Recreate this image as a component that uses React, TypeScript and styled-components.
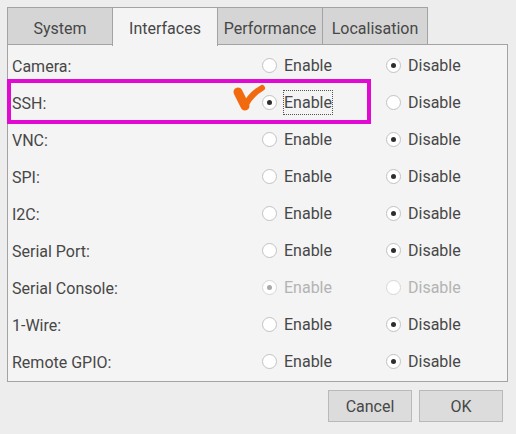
import React from "react";
import styled, { createGlobalStyle } from "styled-components";

const Global = createGlobalStyle`
    html, body {
        margin: 0;
        padding: 0;
        background: #ededed;
        font-family: Roboto, "Liberation Sans", sans-serif;
        font-size: 16px;
        color: #474747;
    }
`;

const Dialog = styled.div`
    width: 516px;
    height: 434px;
    padding: 7px 8px 0 7px;
    box-sizing: border-box;
    display: flex;
    flex-direction: column;
`;

const TabBar = styled.div`
    display: flex;
    height: 38px;
    position: relative;
    z-index: 1;
`;

const Tab = styled.div<{ $active?: boolean }>`
    width: 106px;
    box-sizing: border-box;
    display: flex;
    align-items: center;
    justify-content: center;
    border: 1px solid #a3a3a3;
    border-bottom: ${({ $active }) => ($active ? "none" : "1px solid #a3a3a3")};
    margin-left: -1px;
    background: ${({ $active }) => ($active ? "#f4f4f4" : "#d5d5d5")};
    height: ${({ $active }) => ($active ? "39px" : "38px")};
    padding-top: ${({ $active }) => ($active ? "3px" : "4px")};
    &:first-child {
        margin-left: 0;
    }
`;

const Panel = styled.div`
    margin-top: -1px;
    height: 338px;
    box-sizing: border-box;
    border: 1px solid #a3a3a3;
    background: #f4f4f4;
    padding: 2px 0 0 4px;
`;

const Row = styled.div`
    position: relative;
    height: 37px;
    display: grid;
    grid-template-columns: 250px 124px 1fr;
    align-items: center;
`;

const Label = styled.span`
    padding-top: 1px;
`;

const Option = styled.div<{ $disabled?: boolean }>`
    display: flex;
    align-items: center;
    color: ${({ $disabled }) => ($disabled ? "#b3b3b3" : "#474747")};
`;

const Radio = styled.span<{ $checked?: boolean; $disabled?: boolean }>`
    width: 15px;
    height: 15px;
    box-sizing: border-box;
    border-radius: 50%;
    border: 1px solid ${({ $disabled }) => ($disabled ? "#d6d6d6" : "#c2c2c2")};
    background: #ffffff;
    display: flex;
    align-items: center;
    justify-content: center;
    margin-right: 8px;
    &::after {
        content: "";
        display: ${({ $checked }) => ($checked ? "block" : "none")};
        width: 5px;
        height: 5px;
        border-radius: 50%;
        background: ${({ $disabled }) => ($disabled ? "#a9a9a9" : "#2e2e2e")};
    }
`;

const OptionText = styled.span<{ $focus?: boolean }>`
    padding: 3px 1px 3px 1px;
    margin-left: -2px;
    outline: ${({ $focus }) => ($focus ? "1px dotted #555" : "none")};
    outline-offset: -1px;
`;

const Highlight = styled.div`
    position: absolute;
    left: -5px;
    top: -5px;
    width: 364px;
    height: 45px;
    box-sizing: border-box;
    border: 4px solid #e10ad2;
    pointer-events: none;
`;

const Tick = styled.svg`
    position: absolute;
    left: 219px;
    top: -1px;
`;

const Footer = styled.div`
    display: flex;
    justify-content: flex-end;
    gap: 7px;
    padding: 8px 5px 0 0;
`;

const Button = styled.button`
    width: 84px;
    height: 32px;
    box-sizing: border-box;
    border: 1px solid #b9b9b9;
    background: #dcdcdc;
    font-family: Roboto, "Liberation Sans", sans-serif;
    font-size: 16px;
    color: #474747;
    padding: 1px 0 0;
    border-radius: 0;
`;

type Item = {
    name: string;
    enabled: boolean;
    disabled?: boolean;
    focus?: boolean;
};

const items: Item[] = [
    { name: "Camera:", enabled: false },
    { name: "SSH:", enabled: true, focus: true },
    { name: "VNC:", enabled: false },
    { name: "SPI:", enabled: false },
    { name: "I2C:", enabled: false },
    { name: "Serial Port:", enabled: false },
    { name: "Serial Console:", enabled: true, disabled: true },
    { name: "1-Wire:", enabled: false },
    { name: "Remote GPIO:", enabled: false },
];

const tabs = ["System", "Interfaces", "Performance", "Localisation"];

const App = () => {
    return (
        <Dialog>
            <Global />
            <TabBar>
                {tabs.map((t) => (
                    <Tab key={t} $active={t === "Interfaces"}>{t}</Tab>
                ))}
            </TabBar>
            <Panel>
                {items.map((it) => (
                    <Row key={it.name}>
                        {it.focus && <Highlight />}
                        {it.focus && (
                            <Tick width="36" height="30" viewBox="0 0 36 30">
                                <path d="M7 9 L14 23" fill="none" stroke="#f26a0e" strokeWidth="9" strokeLinecap="round" />
                                <path d="M14 23 C18 15 24 9 31 5" fill="none" stroke="#f26a0e" strokeWidth="6" strokeLinecap="round" />
                            </Tick>
                        )}
                        <Label>{it.name}</Label>
                        <Option $disabled={it.disabled}>
                            <Radio $checked={it.enabled} $disabled={it.disabled} />
                            <OptionText $focus={it.focus}>Enable</OptionText>
                        </Option>
                        <Option $disabled={it.disabled}>
                            <Radio $checked={!it.enabled} $disabled={it.disabled} />
                            <OptionText>Disable</OptionText>
                        </Option>
                    </Row>
                ))}
            </Panel>
            <Footer>
                <Button>Cancel</Button>
                <Button>OK</Button>
            </Footer>
        </Dialog>
    );
};

export default App;
